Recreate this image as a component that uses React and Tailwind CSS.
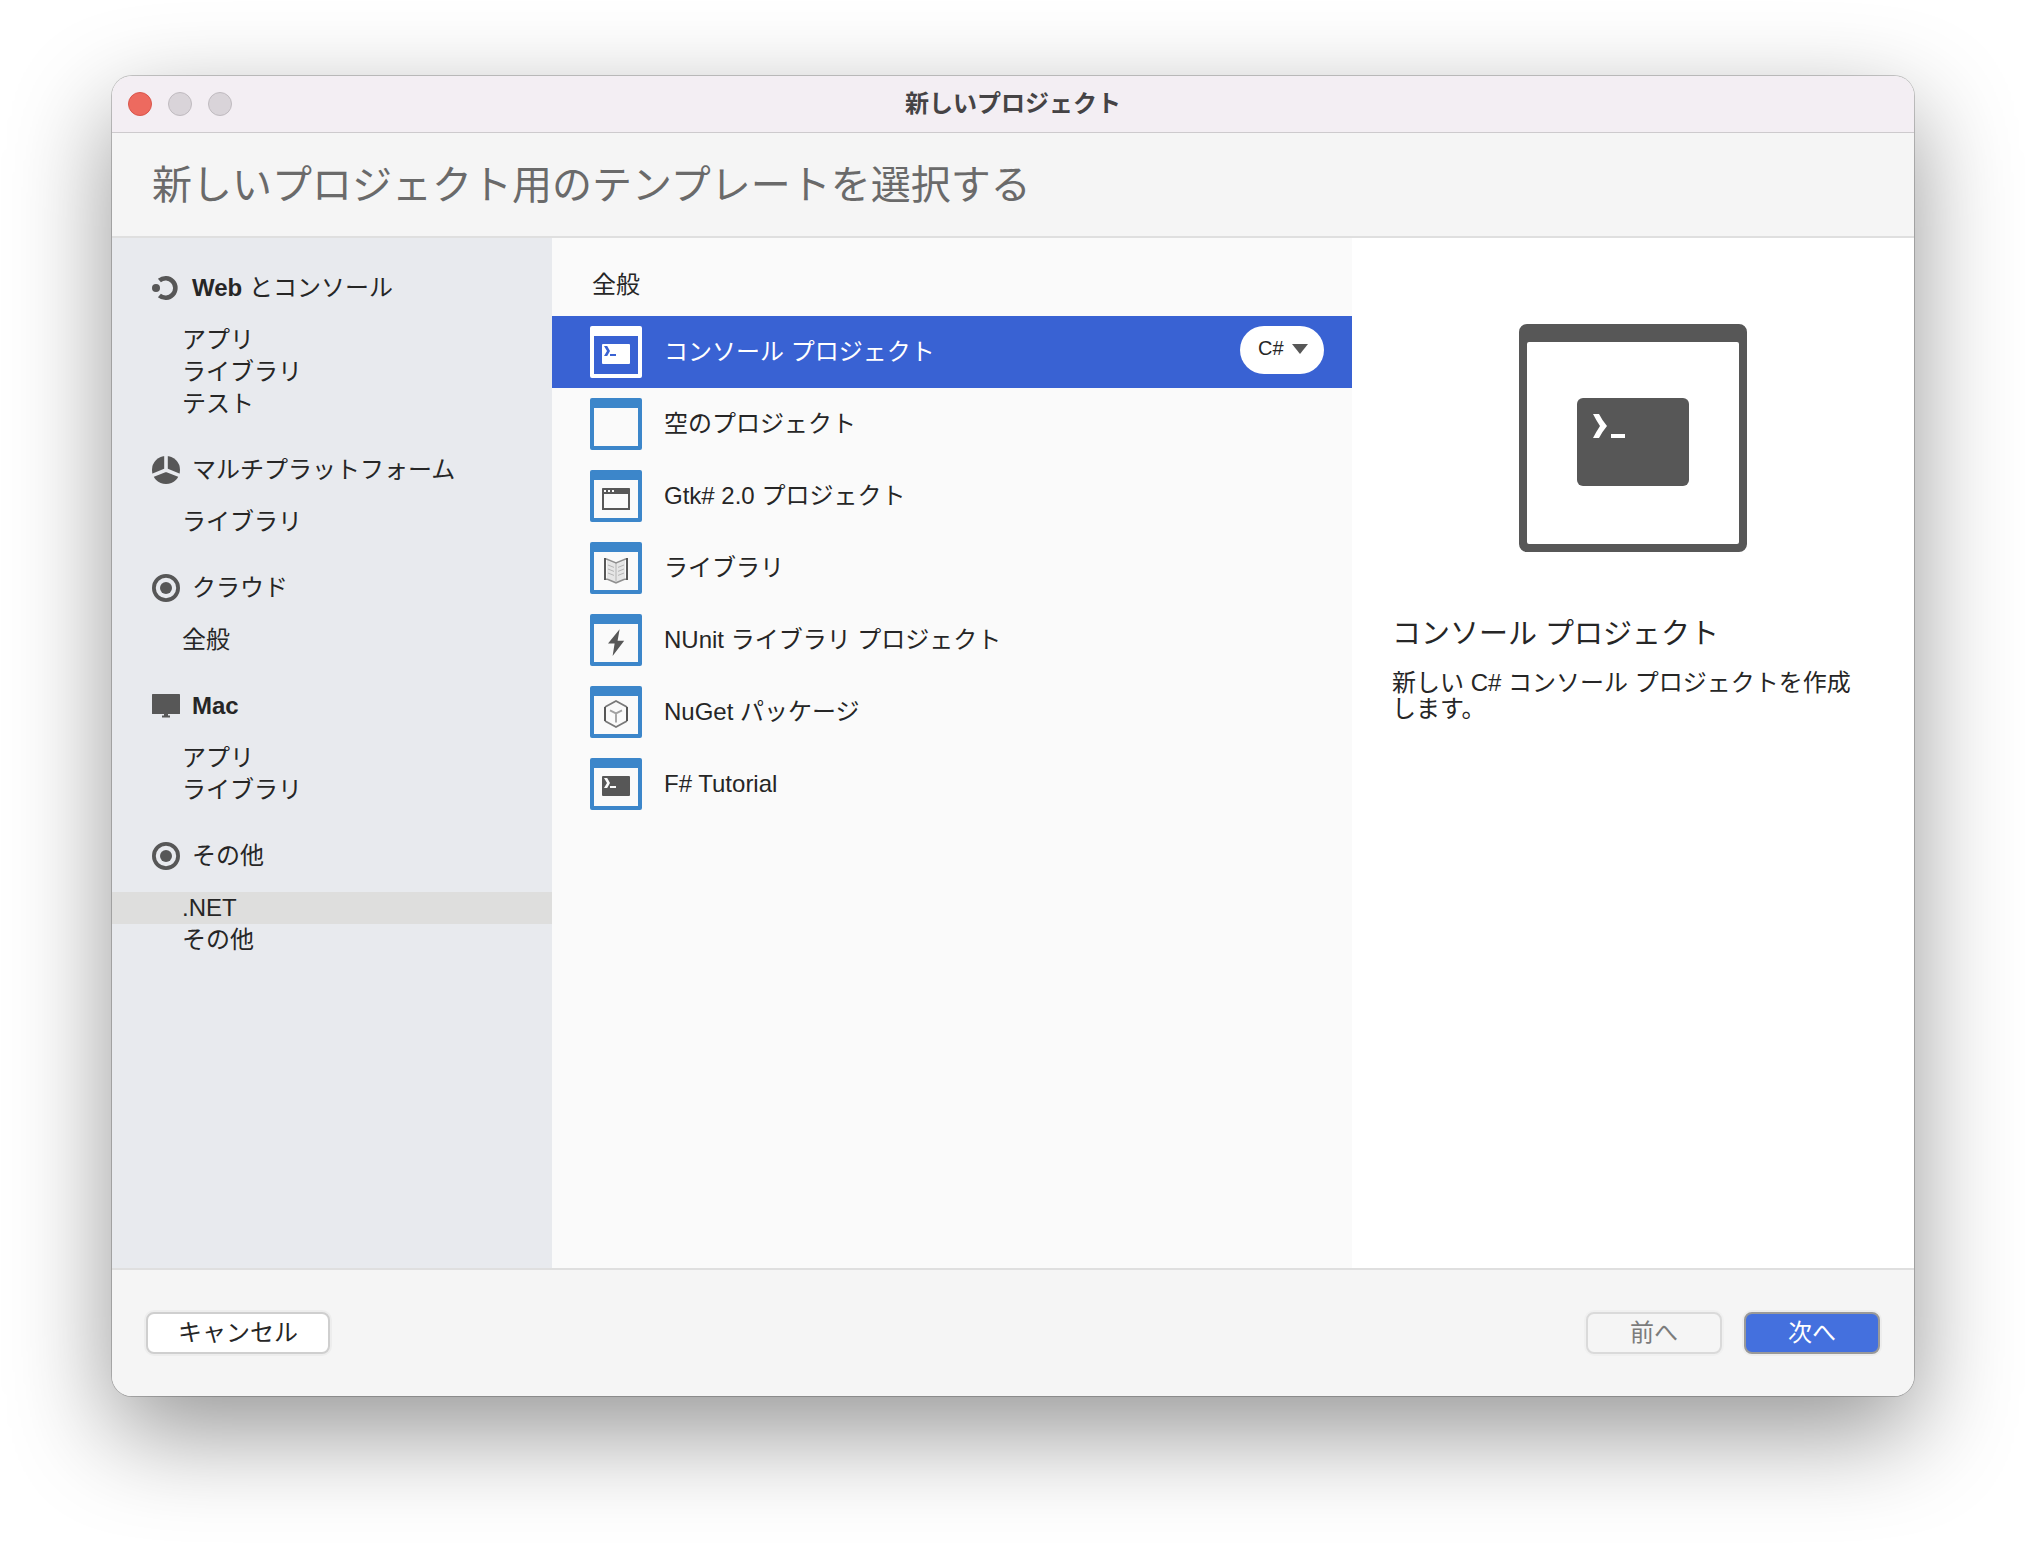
import clsx from "clsx";

const WebIcon = () => (
  <svg viewBox="0 0 28 28" className="size-7">
    <circle cx="4" cy="14" r="4" fill="#575757" />
    <path d="M7.4 6.6A9.7 9.7 0 1 1 7.4 21.4" fill="none" stroke="#575757" strokeWidth="4.6" />
  </svg>
);

const MultiplatformIcon = () => (
  <svg viewBox="0 0 28 28" className="size-7">
    <circle cx="14" cy="14" r="14" fill="#575757" />
    <path d="M14 14V0M14 14L-1 20M14 14L29 20" fill="none" stroke="#e8eaee" strokeWidth="3.6" />
  </svg>
);

const TargetIcon = () => (
  <svg viewBox="0 0 28 28" className="size-7">
    <circle cx="14" cy="14" r="12.1" fill="none" stroke="#575757" strokeWidth="3.8" />
    <circle cx="14" cy="14" r="6" fill="#575757" />
  </svg>
);

const MonitorIcon = () => (
  <svg viewBox="0 0 28 28" className="size-7">
    <rect y="2" width="28" height="20" rx="0.6" fill="#575757" />
    <path d="M12 22h4v1.6h2v2h-8v-2h2z" fill="#575757" />
  </svg>
);

const GLYPHS = {
  console: (
    <path
      fillRule="evenodd"
      fill="currentColor"
      d="M6.5 9h13a.5.5 0 0 1 .5.5v9a.5.5 0 0 1-.5.5h-13a.5.5 0 0 1-.5-.5v-9a.5.5 0 0 1 .5-.5zM7 10l1.5 2.5L7 15h1.6L10 12.5 8.6 10zM10 14v1h3v-1z"
    />
  ),
  window: (
    <path
      fillRule="evenodd"
      fill="currentColor"
      d="M6.4 9h13.2a.4.4 0 0 1 .4.4V20H6V9.4a.4.4 0 0 1 .4-.4zM7 12v7h12v-7zM7 10v1h1v-1zM9 10v1h1v-1zM11 10v1h1v-1z"
    />
  ),
  book: (
    <g fill="none" stroke="currentColor">
      <path d="M8.5 9.2L13 11l4.5-1.8V18L13 20l-4.5-2z" fill="#e6e6e6" stroke="none" />
      <path
        d="M9 11.5l3 1.2M9 13.5l3 1.2M9 15.5l3 1.2M17 11.5l-3 1.2M17 13.5l-3 1.2M17 15.5l-3 1.2M13 10.5v9"
        strokeWidth="0.5"
        opacity="0.35"
      />
      <path d="M7 8.5h1.2L13 10.5l4.8-2H19M7.5 18.6h1.3L13 20.4l4.2-1.8h1.3" strokeWidth="0.8" opacity="0.65" />
      <path d="M7.5 8v11M18.5 8v11" />
    </g>
  ),
  bolt: <path d="M14.8 7.6L9 14.8h3.3l-1 6.2 5.8-7.6h-3.3z" fill="currentColor" />,
  cube: (
    <g fill="none" stroke="currentColor" strokeWidth="0.9">
      <path d="M7.5 10.5v7M18.5 10.5v7" strokeWidth="1" />
      <path d="M7.5 10.5L13 7.5l5.5 3M7.5 17.5l5.5 3 5.5-3" opacity="0.8" />
      <path d="M10 12.2l3 1.5 3-1.5M13 13.7v4.5" opacity="0.55" />
    </g>
  ),
};

const TemplateIcon = ({ glyph, selected }) => (
  <svg viewBox="0 0 26 26" className="size-13 shrink-0">
    <path
      fillRule="evenodd"
      fill={selected ? "#ffffff" : "#3c86ca"}
      d="M1 0h24a1 1 0 0 1 1 1v24a1 1 0 0 1-1 1H1a1 1 0 0 1-1-1V1a1 1 0 0 1 1-1zM2 5v19h22V5z"
    />
    <g className={selected ? "text-white" : "text-[#575757]"}>{GLYPHS[glyph]}</g>
  </svg>
);

const PreviewIcon = () => (
  <svg viewBox="0 0 228 228" className="mx-auto size-[228px]">
    <path
      fillRule="evenodd"
      fill="#575757"
      d="M8 0h212a8 8 0 0 1 8 8v212a8 8 0 0 1-8 8H8a8 8 0 0 1-8-8V8a8 8 0 0 1 8-8zM10 18a2 2 0 0 0-2 2v198a2 2 0 0 0 2 2h208a2 2 0 0 0 2-2V20a2 2 0 0 0-2-2z"
    />
    <rect x="58" y="74" width="112" height="88" rx="6" fill="#575757" />
    <path d="M74 90h6q3 6 8 12q-5 6-8 12h-6q3-6 7-12q-4-6-7-12zM92 110h14v4H92z" fill="#fff" />
  </svg>
);

const CATEGORIES = [
  {
    icon: <WebIcon />,
    label: (
      <>
        <b>Web</b> とコンソール
      </>
    ),
    items: ["アプリ", "ライブラリ", "テスト"],
  },
  { icon: <MultiplatformIcon />, label: "マルチプラットフォーム", items: ["ライブラリ"] },
  { icon: <TargetIcon />, label: "クラウド", items: ["全般"] },
  { icon: <MonitorIcon />, label: <b>Mac</b>, items: ["アプリ", "ライブラリ"] },
  { icon: <TargetIcon />, label: "その他", items: [".NET", "その他"] },
];

const TEMPLATES = [
  { glyph: "console", name: "コンソール プロジェクト", selected: true },
  { glyph: null, name: "空のプロジェクト" },
  { glyph: "window", name: "Gtk# 2.0 プロジェクト" },
  { glyph: "book", name: "ライブラリ" },
  { glyph: "bolt", name: "NUnit ライブラリ プロジェクト" },
  { glyph: "cube", name: "NuGet パッケージ" },
  { glyph: "console", name: "F# Tutorial" },
];

const TitleBar = () => (
  <div className="relative flex h-[57px] items-center gap-4 border-b border-[#cdcacd] bg-[#f3eef3] px-4">
    <button aria-label="閉じる" className="size-6 rounded-full border border-[#d9554b] bg-[#ed6a5f]" />
    <button aria-label="しまう" className="size-6 rounded-full border border-[#bfbabf] bg-[#d9d4d9]" />
    <button aria-label="拡大" className="size-6 rounded-full border border-[#bfbabf] bg-[#d9d4d9]" />
    <span className="pointer-events-none absolute inset-x-0 text-center font-bold text-[#454345]">
      新しいプロジェクト
    </span>
  </div>
);

const Sidebar = () => (
  <nav className="w-[440px] shrink-0 bg-[#e8eaee]">
    {CATEGORIES.map((category, i) => (
      <section key={i}>
        <h2 className="mt-8 mb-[18px] flex h-9 items-center gap-3 pl-10">
          {category.icon}
          <span>{category.label}</span>
        </h2>
        {category.items.map((item) => (
          <button
            key={item}
            className={clsx("block h-8 w-full pl-[70px] text-left leading-8", item === ".NET" && "bg-[#dededd]")}
          >
            {item}
          </button>
        ))}
      </section>
    ))}
  </nav>
);

const LanguageSelect = () => (
  <div className="relative mt-[10px] mr-7 self-start">
    <select
      aria-label="言語"
      className="h-12 w-[84px] appearance-none rounded-full bg-white pb-1 pl-[18px] text-xl text-[#262626]"
    >
      <option>C#</option>
      <option>F#</option>
      <option>VB</option>
    </select>
    <svg viewBox="0 0 16 10" className="pointer-events-none absolute top-[18px] right-4 h-[10px] w-4">
      <path d="M0 0h16L8 10z" fill="#575757" />
    </svg>
  </div>
);

const TemplateList = () => (
  <main className="min-w-0 flex-[800] bg-[#fafafa]">
    <h2 className="px-10 pt-8 pb-4 leading-[30px]">全般</h2>
    <ul>
      {TEMPLATES.map(({ glyph, name, selected }) => (
        <li key={name} className={clsx("flex h-18 items-center", selected && "bg-[#3962d3] text-white")}>
          <button className="flex flex-1 items-center gap-[22px] pl-[38px] text-left">
            <TemplateIcon glyph={glyph} selected={selected} />
            <span>{name}</span>
          </button>
          {selected && <LanguageSelect />}
        </li>
      ))}
    </ul>
  </main>
);

const Preview = () => (
  <aside className="min-w-0 flex-[562] bg-white pt-[86px]">
    <PreviewIcon />
    <div className="pr-12 pl-10">
      <h3 className="mt-16 text-[29px] leading-9">コンソール プロジェクト</h3>
      <p className="mt-[18px] leading-[26px]">新しい C# コンソール プロジェクトを作成します。</p>
    </div>
  </aside>
);

const Footer = () => (
  <footer className="flex items-center border-t-2 border-[#dfdfdf] bg-[#f5f5f5] px-[34px] py-[42px]">
    <button className="h-[42px] w-[184px] rounded-lg border-2 border-[#cfcfcf] bg-white leading-9 shadow-[0_0_0_2px_rgba(0,0,0,0.03)]">
      キャンセル
    </button>
    <button
      disabled
      className="ml-auto h-[42px] w-[136px] rounded-lg border-2 border-[#dadada] bg-[#f5f5f5] leading-9 text-[#7c7c7c] shadow-[0_0_0_2px_rgba(0,0,0,0.02)]"
    >
      前へ
    </button>
    <button className="ml-[22px] h-[42px] w-[136px] rounded-lg border-2 border-[#999999] bg-[#4470de] leading-9 text-white shadow-[0_0_0_2px_rgba(0,0,0,0.03)]">
      次へ
    </button>
  </footer>
);

export default function App() {
  return (
    <div
      lang="ja"
      className="flex min-h-screen flex-col overflow-hidden bg-white px-28 pt-[76px] pb-[148px] font-['Liberation_Sans','Noto_Sans_CJK_JP',sans-serif] text-2xl text-[#262626]"
    >
      <div className="flex flex-1 flex-col rounded-[20px] shadow-[0_0_0_1px_rgba(0,0,0,0.2),0_36px_100px_rgba(0,0,0,0.42)]">
        <div className="flex flex-1 flex-col overflow-hidden rounded-[20px]">
          <TitleBar />
          <header className="border-b-2 border-[#dfdfdf] bg-[#f5f5f5] px-10">
            <h1 className="h-[103px] text-[40px] leading-[105px] text-[#6a6a6a]">
              新しいプロジェクト用のテンプレートを選択する
            </h1>
          </header>
          <div className="flex flex-1">
            <Sidebar />
            <TemplateList />
            <Preview />
          </div>
          <Footer />
        </div>
      </div>
    </div>
  );
}
